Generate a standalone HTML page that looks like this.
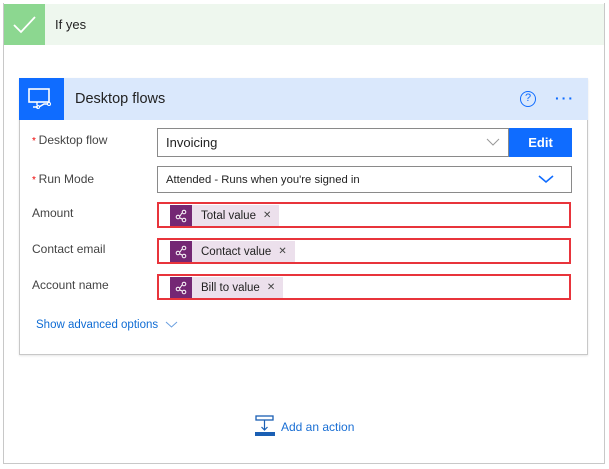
<!DOCTYPE html>
<html><head><meta charset="utf-8"><style>
*{margin:0;padding:0;box-sizing:border-box}
body{width:609px;height:469px;background:#fff;font-family:"Liberation Sans",sans-serif;position:relative;overflow:hidden;color:#333}
.abs{position:absolute}
.outer{left:3px;top:3px;width:602px;height:461px;border:1px solid #c8c8c8;border-top:none}
.gh{left:4px;top:4px;width:600px;height:41px;background:#eef7ee}
.gc{left:4px;top:4px;width:41px;height:41px;background:#8cd790}
.card{left:19px;top:78px;width:569px;height:277px;border:1px solid #c8c8c8;box-shadow:0 1px 2px rgba(0,0,0,.1)}
.ch{left:19px;top:78px;width:569px;height:42px;background:#dae8fc}
.ci{left:19px;top:78px;width:45px;height:42px;background:#0f6cff}
.lbl{font-size:12px;color:#444;left:32px}
.req{color:#e00;font-size:10px}
.inp{border:1px solid #8a8a8a;background:#fff;font-size:13px;color:#222;padding-left:8px;display:flex;align-items:center}
.red{left:157px;width:414px;height:26px;border:2px solid #e8343b;background:#fff}
.tok{position:absolute;left:11px;top:1px;height:21px;display:flex;align-items:center;background:#ece0ec;font-size:11.5px;color:#222}
.ti{width:22px;height:21px;background:#742774;display:flex;align-items:center;justify-content:center;margin-right:9px}
.x{margin:0 8px 0 7px;font-size:10px;color:#444}
</style></head><body>
<div class="abs outer"></div>
<div class="abs gh"></div>
<div class="abs gc"><svg width="41" height="41"><path d="M10 21 L17 28 L31 13" stroke="#fff" stroke-width="1.8" fill="none"/></svg></div>
<div class="abs" style="left:55px;top:17px;font-size:13px;color:#222">If yes</div>

<div class="abs card"></div>
<div class="abs ch"></div>
<div class="abs ci"><svg width="45" height="42"><rect x="10" y="11" width="20" height="13" fill="none" stroke="#fff" stroke-width="1.6"/><path d="M18 24v3M14 29h5M20 29l5-3h4" stroke="#fff" stroke-width="1.4" fill="none"/><circle cx="19" cy="29" r="1.5" fill="none" stroke="#fff"/><circle cx="30" cy="26" r="1.5" fill="none" stroke="#fff"/></svg></div>
<div class="abs" style="left:75px;top:91px;font-size:14.5px;color:#222">Desktop flows</div>
<div class="abs" style="left:520px;top:91px;width:16px;height:16px;border:1.5px solid #0f6cff;border-radius:50%;color:#0f6cff;font-size:11px;text-align:center;line-height:13px">?</div>
<div class="abs" style="left:555px;top:90px;color:#0f6cff;font-size:14px;letter-spacing:2px;font-weight:bold">···</div>

<div class="abs lbl" style="top:133px"><span class="req">* </span>Desktop flow</div>
<div class="abs inp" style="left:157px;top:128px;width:352px;height:29px">Invoicing</div>
<svg class="abs" style="left:486px;top:137px" width="14" height="10"><path d="M1 2l6 6 6-6" stroke="#999" fill="none"/></svg>
<div class="abs" style="left:509px;top:128px;width:63px;height:29px;background:#0f6cff;color:#fff;font-size:13px;font-weight:bold;text-align:center;line-height:29px">Edit</div>

<div class="abs lbl" style="top:172px"><span class="req">* </span>Run Mode</div>
<div class="abs inp" style="left:157px;top:166px;width:415px;height:27px;font-size:11.3px">Attended - Runs when you're signed in</div>
<svg class="abs" style="left:538px;top:174px" width="16" height="10"><path d="M1 2l7 6 7-6" stroke="#0f6cff" stroke-width="1.6" fill="none"/></svg>

<div class="abs lbl" style="top:206px">Amount</div>
<div class="abs lbl" style="top:242px">Contact email</div>
<div class="abs lbl" style="top:278px">Account name</div>

<div class="abs red" style="top:202px"><div class="tok"><div class="ti"><svg width="14" height="14"><circle cx="4" cy="8" r="1.8" fill="none" stroke="#fff"/><circle cx="10" cy="3" r="1.8" fill="none" stroke="#fff"/><circle cx="10" cy="11" r="1.8" fill="none" stroke="#fff"/><path d="M6 7l2-3M6 9l2 1" stroke="#fff"/></svg></div>Total value<span class="x">✕</span></div></div>
<div class="abs red" style="top:238px"><div class="tok"><div class="ti"><svg width="14" height="14"><circle cx="4" cy="8" r="1.8" fill="none" stroke="#fff"/><circle cx="10" cy="3" r="1.8" fill="none" stroke="#fff"/><circle cx="10" cy="11" r="1.8" fill="none" stroke="#fff"/><path d="M6 7l2-3M6 9l2 1" stroke="#fff"/></svg></div>Contact value<span class="x">✕</span></div></div>
<div class="abs red" style="top:274px"><div class="tok"><div class="ti"><svg width="14" height="14"><circle cx="4" cy="8" r="1.8" fill="none" stroke="#fff"/><circle cx="10" cy="3" r="1.8" fill="none" stroke="#fff"/><circle cx="10" cy="11" r="1.8" fill="none" stroke="#fff"/><path d="M6 7l2-3M6 9l2 1" stroke="#fff"/></svg></div>Bill to value<span class="x">✕</span></div></div>

<div class="abs" style="left:36px;top:319px;font-size:11.5px;color:#0f6cd4">Show advanced options</div>
<svg class="abs" style="left:165px;top:321px" width="13" height="8"><path d="M1 1l5.5 5 5.5-5" stroke="#6a9fe0" fill="none"/></svg>

<svg class="abs" style="left:255px;top:415px" width="20" height="22"><rect x="1" y="1" width="17" height="4" fill="none" stroke="#1a5fb4" stroke-width="1.3"/><path d="M9.5 5v10M6.5 12l3 3 3-3" stroke="#1a5fb4" fill="none" stroke-width="1.2"/><rect x="0" y="17" width="20" height="4" fill="#1a5fb4"/></svg>
<div class="abs" style="left:281px;top:420px;font-size:12px;color:#1a6fd4">Add an action</div>
</body></html>
